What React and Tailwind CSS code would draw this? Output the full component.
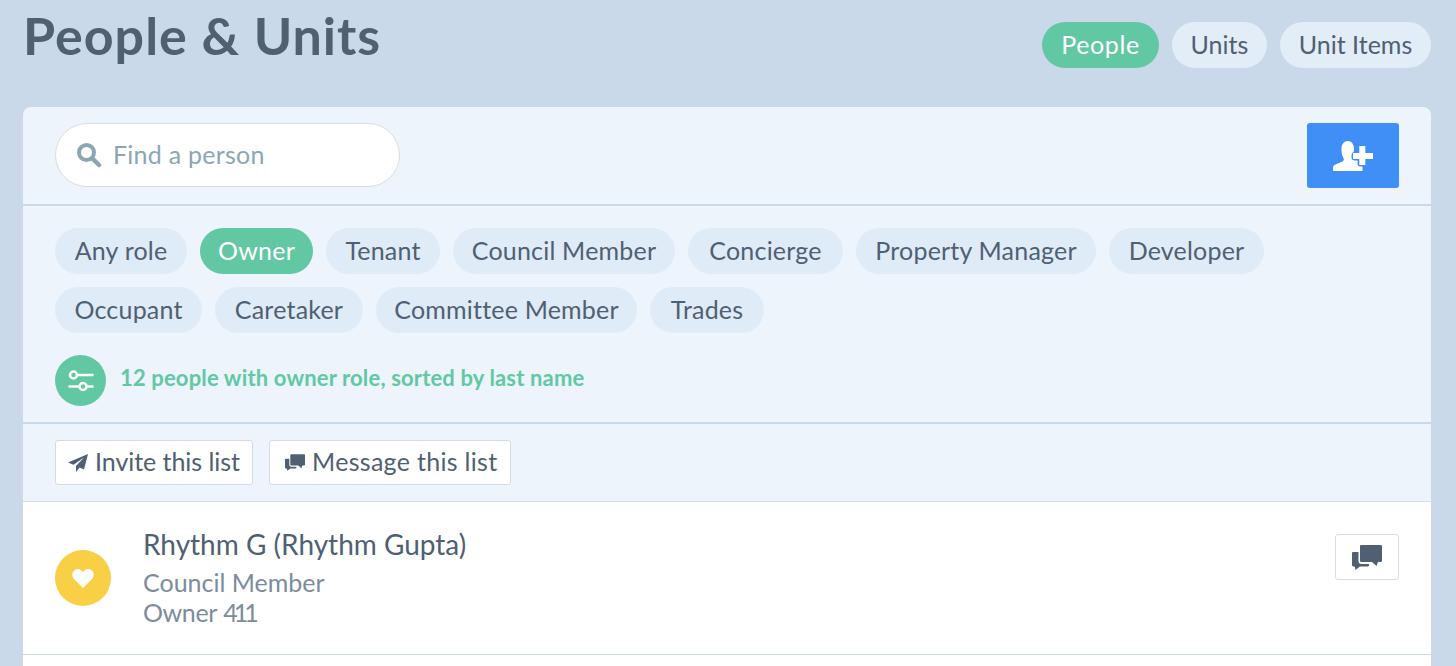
const FONT = "font-['Lato','Liberation_Sans',sans-serif]";

const PILLS = [
  ['Any role', 'w-[132px]'],
  ['Owner', 'w-[113px]'],
  ['Tenant', 'w-[114px]'],
  ['Council Member', 'w-[222px]'],
  ['Concierge', 'w-[155px]'],
  ['Property Manager', 'w-[240px]'],
  ['Developer', 'w-[155px]'],
  ['Occupant', 'w-[147px]'],
  ['Caretaker', 'w-[148px]'],
  ['Committee Member', 'w-[261px]'],
  ['Trades', 'w-[114px]'],
];

function Pill({ label, width, active }) {
  return (
    <span className={`h-[46px] ${width} rounded-full flex items-center justify-center text-[25px] tracking-[0.2px] ${active ? 'bg-[#62c8a3] text-white' : 'bg-[#dfebf7] text-[#4f6072]'}`}>
      {label}
    </span>
  );
}

function Chat({ className }) {
  return (
    <svg viewBox="0 0 30 25" className={className} fill="currentColor">
      <path d="M8 1.200C8 .5 8.500 0 9.200 0h19.600C29.500 0 30 .5 30 1.200v14.600c0 .7-.5 1.200-1.200 1.200H26l-1.500 4L20 17H9.200C8.500 17 8 16.500 8 15.800V1.200z" />
      <path d="M0 8.200C0 7.500.5 7 1.200 7H6.500v9c0 1.700 1 3 2.700 3H17v1.300c0 .7-.5 1.200-1.200 1.200H8l-4.500 3.500-.8-3.500H1.200C.5 21.500 0 21 0 20.300V8.200z" />
    </svg>
  );
}

export default function App() {
  return (
    <div className={`${FONT} bg-[#c9d9ea] h-[666px] overflow-hidden pl-[23px] pr-[25px] text-[#4f6072]`}>
      <div className="flex justify-between h-[107px]">
        <h1 className="text-[52px] leading-[70px] font-bold tracking-[1px] text-[#4f6072]">People &amp; Units</h1>
        <div className="flex gap-[13px] pt-[22px]">
          <span className="h-[46px] w-[117px] rounded-full flex items-center justify-center text-[25px] tracking-[0.6px] bg-[#62c8a3] text-white">People</span>
          <span className="h-[46px] w-[95px] rounded-full flex items-center justify-center text-[25px] bg-[#e3edf8] text-[#4f6072]">Units</span>
          <span className="h-[46px] w-[151px] rounded-full flex items-center justify-center text-[25px] bg-[#e3edf8] text-[#4f6072]">Unit Items</span>
        </div>
      </div>

      <div className="bg-[#edf4fc] rounded-t-lg">
        <div className="h-[99px] px-8 pt-4 flex justify-between items-start border-b-2 border-[#c9d9ea]">
          <div className="w-[345px] h-16 bg-white rounded-full border border-[#d9dee2] flex items-center pl-5 gap-[11px]">
            <svg viewBox="0 0 26 26" className="w-[26px] h-[26px] text-[#8ba6b3]" fill="none" stroke="currentColor">
              <circle cx="10.500" cy="10.500" r="7.500" strokeWidth="4" />
              <path d="M16.500 16.500 L23 23" strokeWidth="4.500" strokeLinecap="round" />
            </svg>
            <span className="text-[25px] tracking-[0.25px] text-[#8ba6b3]">Find a person</span>
          </div>
          <button className="w-[92px] h-[65px] bg-[#3f8ff7] rounded-[3px] flex items-center justify-center">
            <svg viewBox="0 0 40 30" className="w-10 h-[30px]" fill="white">
              <path d="M0 30v-3.500c0-1.500 1-2.500 3-3.300l6-2.400c1.200-.5 1.800-1.400 1.800-2.600 0-1-.8-2-1.300-3.200C8.800 13.500 8.500 11 8.500 7.500 8.500 3 11.300 0 14.800 0S21 3 21 7.500c0 1.200-.1 2.200-.3 3.200-1.500 1-2.200 2.300-2.200 3.800v2c0 1.800 1.200 3 3 3h3v3.500c0 1.500 1 2.500 2.500 2.500h2.500V30z" />
              <path d="M26.300 5h6v7h7.700v6h-7.700v6h-6v-6H20v-6h6.300z" />
            </svg>
          </button>
        </div>

        <div className="h-[218px] px-8 pt-[22px] border-b-2 border-[#c9d9ea]">
          <div className="flex flex-wrap gap-[13px]">
            {PILLS.map(([p, w]) => (
              <Pill key={p} label={p} width={w} active={p === 'Owner'} />
            ))}
          </div>
          <div className="flex items-center gap-[14px] mt-[22px]">
            <span className="w-[51px] h-[51px] rounded-full bg-[#62c8a3] flex items-center justify-center">
              <svg viewBox="0 0 26 22" className="w-[26px] h-[22px]" fill="none" stroke="white" strokeWidth="2.500" strokeLinecap="round">
                <circle cx="5.500" cy="5" r="3.500" />
                <path d="M9 5h15.500M1.500 16.500h10M19 16.500h5.500" />
                <circle cx="15" cy="16.500" r="3.500" />
              </svg>
            </span>
            <span className="text-[22px] leading-[28px] pb-[6px] tracking-[0.15px] font-bold text-[#62c8a3]">12 people with owner role, sorted by last name</span>
          </div>
        </div>

        <div className="h-[78px] px-8 pt-4 flex gap-4 border-b border-[#d5dde5]">
          <button className="h-[45px] w-[198px] bg-white border border-[#d5dbe2] rounded-[3px] flex items-center pl-[12px] pb-[2px] gap-[7px] text-[25px] tracking-[-0.05px] text-[#4f6072]">
            <svg viewBox="0 0 20 18" className="w-5 h-[18px] mt-[2px]" fill="currentColor">
              <path d="M20 0 0 8.500l5.500 2.300L16 3.500 8 12v6l3.500-4.500 4.500 2z" />
            </svg>
            Invite this list
          </button>
          <button className="h-[45px] w-[242px] bg-white border border-[#d5dbe2] rounded-[3px] flex items-center pl-[15px] pb-[2px] gap-[7px] text-[25px] tracking-[0.3px] text-[#4f6072]">
            <Chat className="w-5 h-[17px] mt-[2px]" />
            Message this list
          </button>
        </div>

        <div className="h-[153px] bg-white border-b border-[#c9d9ea] px-8 flex justify-between">
          <div className="flex items-center gap-8 h-full">
            <span className="w-14 h-14 rounded-full bg-[#f9cf45] flex items-center justify-center">
              <svg viewBox="0 0 24 21" className="w-[22px] h-[19px]" fill="white">
                <path d="M12 21 2 11C-.5 8.500-.5 4 2 1.800 4.500-.6 8.500-.5 10.500 1.800L12 3.300l1.500-1.500C15.500-.5 19.500-.6 22 1.800c2.500 2.200 2.500 6.700 0 9.200z" />
              </svg>
            </span>
            <div>
              <div className="text-[28px] leading-[32px] -mt-[2px] text-[#4f6072]">Rhythm G (Rhythm Gupta)</div>
              <div className="text-[25px] leading-[30px] mt-[7px] text-[#7c8c9c]">Council Member</div>
              <div className="text-[25px] leading-[30px] text-[#7c8c9c]"><span className="tracking-[-0.4px]">Owner</span> <span className="tracking-[-4px]">411</span></div>
            </div>
          </div>
          <button className="mt-8 w-16 h-[46px] border border-[#d9dde1] rounded-[3px] flex items-center justify-center text-[#4f6072]">
            <Chat className="w-[30px] h-[25px]" />
          </button>
        </div>
        <div className="h-3 bg-white" />
      </div>
    </div>
  );
}
